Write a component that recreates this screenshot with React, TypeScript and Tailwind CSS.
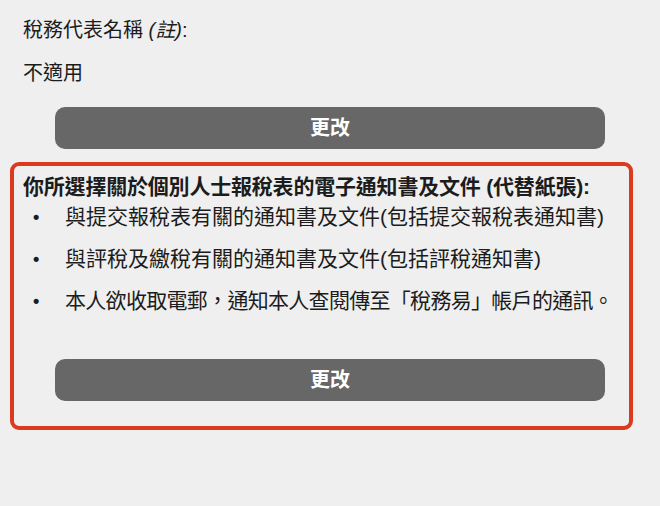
import React from "react";

const font = {
  fontFamily: '"Liberation Sans", "Noto Sans CJK TC", sans-serif',
};

const items = [
  { text: "與提交報稅表有關的通知書及文件(包括提交報稅表通知書)", cls: "" },
  { text: "與評稅及繳稅有關的通知書及文件(包括評稅通知書)", cls: "" },
  { text: "本人欲收取電郵，通知本人查閱傳至「稅務易」帳戶的通訊。", cls: "tracking-[-0.7px]" },
];

const ChangeButton = () => (
  <button className="flex h-[42px] w-[550px] items-center justify-center rounded-[10px] bg-[#676767] text-[20px] font-bold text-white">
    更改
  </button>
);

export default function App() {
  return (
    <div
      className="h-[506px] w-[660px] overflow-hidden bg-[#efefef] pt-[16px] text-[#1c1c1c]"
      style={font}
    >
      <div className="pl-[23px] text-[20px] leading-[28px]">
        稅務代表名稱 <i>(註)</i>:
      </div>
      <div className="mt-[15px] pl-[23px] text-[20px] leading-[28px]">不適用</div>
      <div className="mt-[20px] pl-[55px]">
        <ChangeButton />
      </div>

      <div className="ml-[10px] mt-[13px] w-[623px] rounded-[9px] border-4 border-[#dc3a1f] pb-[25px] pl-[9px] pt-[7px]">
        <div className="text-[21px] font-bold leading-[28px] tracking-[-0.2px]">
          你所選擇關於個別人士報稅表的電子通知書及文件 (代替紙張):
        </div>
        <ul className="mt-[2px] flex flex-col gap-[14px]">
          {items.map((item) => (
            <li key={item.text} className="flex whitespace-nowrap text-[21px] leading-[28px]">
              <span className="w-[42px] shrink-0 pl-[10px] text-[18px] font-bold">•</span>
              <span className={item.cls}>{item.text}</span>
            </li>
          ))}
        </ul>
        <div className="mt-[44px] pl-[32px]">
          <ChangeButton />
        </div>
      </div>
    </div>
  );
}
